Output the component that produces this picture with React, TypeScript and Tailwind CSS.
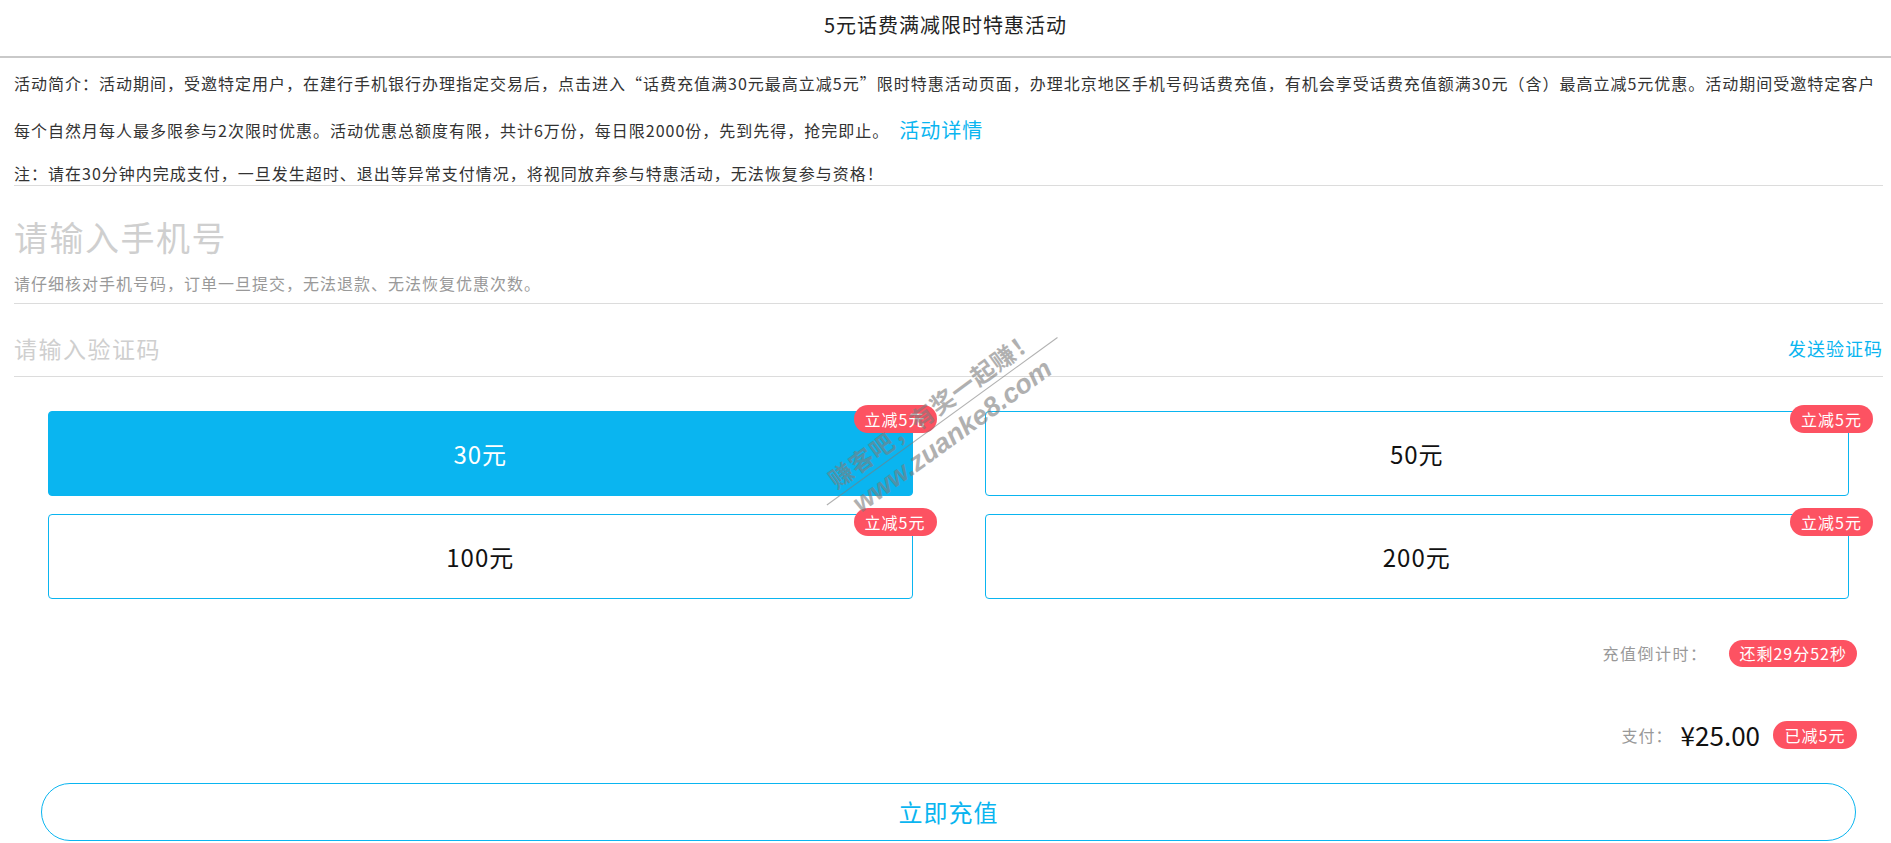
import React from "react";

const F = "font-['Noto_Sans_CJK_SC','Microsoft_YaHei',sans-serif]";

function Badge({ children, className = "" }: { children: React.ReactNode; className?: string }) {
  return (
    <span
      className={`inline-flex items-center justify-center rounded-full bg-[#fd5262] text-white text-[16px] tracking-[1px] leading-none ${className}`}
    >
      {children}
    </span>
  );
}

function Card({ label, selected }: { label: string; selected?: boolean }) {
  return (
    <div
      className={`relative h-[85px] rounded-[4px] border border-[#0ab5f0] flex items-center justify-center text-[24px] tracking-[1px] ${
        selected ? "bg-[#0ab5f0] text-white" : "bg-white text-[#111]"
      }`}
    >
      {label}
      <Badge className="absolute right-[-25px] top-[-7px] h-[28px] w-[83px]">立减5元</Badge>
    </div>
  );
}

export default function App() {
  return (
    <div className={`relative min-h-[843px] bg-white ${F} overflow-hidden`}>
      <div className="h-[58px] border-b-2 border-[#c9c9c9] flex items-center justify-center pb-[6px] text-[20px] tracking-[1px] text-[#222]">
        5元话费满减限时特惠活动
      </div>

      <div className="ml-[14px] mr-[8px]">
        <div className="border-b border-[#dcdcdc] text-[16px] tracking-[1px] text-[#333] pt-[3px] whitespace-nowrap">
          <div className="h-[44px] flex items-center">
            活动简介：活动期间，受邀特定用户，在建行手机银行办理指定交易后，点击进入“话费充值满30元最高立减5元”限时特惠活动页面，办理北京地区手机号码话费充值，有机会享受话费充值额满30元（含）最高立减5元优惠。活动期间受邀特定客户
          </div>
          <div className="h-[50px] flex items-center">
            每个自然月每人最多限参与2次限时优惠。活动优惠总额度有限，共计6万份，每日限2000份，先到先得，抢完即止。
            <span className="ml-[10px] text-[20px] text-[#0ab5f0]">活动详情</span>
          </div>
          <div className="h-[30px] pt-[6px] flex items-center">
            注：请在30分钟内完成支付，一旦发生超时、退出等异常支付情况，将视同放弃参与特惠活动，无法恢复参与资格！
          </div>
        </div>

        <div className="border-b border-[#dcdcdc] pt-[26px] pb-[8px]">
          <div className="h-[48px] flex items-center text-[34px] tracking-[1.5px] text-[#cfcfcf]">请输入手机号</div>
          <div className="mt-[11px] h-[24px] flex items-center text-[16px] tracking-[1px] text-[#999]">
            请仔细核对手机号码，订单一旦提交，无法退款、无法恢复优惠次数。
          </div>
        </div>

        <div className="border-b border-[#dcdcdc] pt-[28px] pb-[12px] h-[73px] flex items-center justify-between">
          <span className="text-[23px] tracking-[1.5px] text-[#cfcfcf]">请输入验证码</span>
          <span className="text-[18px] tracking-[1px] text-[#0ab5f0]">发送验证码</span>
        </div>

        <div className="pt-[34px] px-[34px] grid grid-cols-2 gap-x-[72px] gap-y-[18px]">
          <Card label="30元" selected />
          <Card label="50元" />
          <Card label="100元" />
          <Card label="200元" />
        </div>

        <div className="mt-[40px] pr-[26px] flex items-center justify-end h-[28px]">
          <span className="text-[16px] tracking-[1.5px] text-[#999]">充值倒计时：</span>
          <Badge className="ml-[22px] h-[27px] px-[10px]">还剩29分52秒</Badge>
        </div>

        <div className="mt-[53px] pr-[26px] flex items-center justify-end h-[30px]">
          <span className="text-[16px] tracking-[1px] text-[#999]">支付：</span>
          <span className="ml-[8px] text-[26px] text-[#111] leading-none">¥25.00</span>
          <Badge className="ml-[13px] h-[28px] w-[84px]">已减5元</Badge>
        </div>

        <div className="mt-[33px] mx-[27px] h-[58px] rounded-full border border-[#0ab5f0] flex items-center justify-center text-[24px] tracking-[1px] text-[#0ab5f0]">
          立即充值
        </div>
      </div>

      <div className="pointer-events-none absolute left-[785px] top-[390px] w-[320px] h-[72px] -rotate-[36deg] flex flex-col items-center text-[#7d7d7d] opacity-60">
        <div className="text-[24px] font-bold leading-[28px] tracking-[1px]">赚客吧，有奖一起赚！</div>
        <div className="w-[285px] h-[1px] bg-[#7d7d7d] my-[2px]"></div>
        <div className="font-['Liberation_Sans',sans-serif] italic font-bold text-[27px] leading-[30px]">www.zuanke8.com</div>
      </div>
    </div>
  );
}
